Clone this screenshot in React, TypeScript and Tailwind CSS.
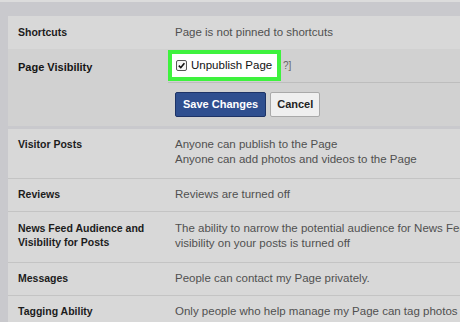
import React from "react";

const Row = ({
  label,
  lines,
  h,
  border = true,
}: {
  label: string[];
  lines: string[];
  h: string;
  border?: boolean;
}) => (
  <div className={`flex items-start ${h} ${border ? "border-t border-[#c4c4c4]" : ""}`}>
    <div className="w-[167px] shrink-0 pl-[10px] text-[10.5px] font-bold leading-[14px] text-[#1c1c1c]">
      {label.map((l) => (
        <div key={l}>{l}</div>
      ))}
    </div>
    <div className="whitespace-nowrap text-[11.5px] leading-[15px] text-[#505050]">
      {lines.map((l) => (
        <div key={l}>{l}</div>
      ))}
    </div>
  </div>
);

export default function App() {
  return (
    <div className="w-[460px] h-[322px] overflow-hidden bg-[#c9c9cd] font-['Liberation_Sans',Arial,sans-serif]">
      <div className="h-[2px] bg-[#dcdcdc]" />
      <div className="pt-[14px] pl-2">
        <div className="w-[452px] bg-[#d8d8d8]">
          {/* Shortcuts */}
          <div className="flex items-center h-[33px]">
            <div className="w-[167px] shrink-0 pl-[10px] text-[10.5px] font-bold text-[#1c1c1c]">
              Shortcuts
            </div>
            <div className="whitespace-nowrap text-[11.5px] text-[#505050]">
              Page is not pinned to shortcuts
            </div>
          </div>

          {/* Page Visibility editor */}
          <div className="flex bg-[#d1d1d1] h-[77px]">
            <div className="w-[160px] shrink-0 pl-[10px] pt-[10px] text-[11px] font-bold text-[#151515]">
              Page Visibility
            </div>
            <div className="flex-1 flex flex-col">
              <div className="h-[34px] border-b border-[#bdbdbd] flex items-center">
                <div className="flex items-center h-[31px] w-[113px] bg-white border-[4px] border-[#3ef23e] pl-[4px]">
                  <span className="w-[11px] h-[11px] rounded-[2px] border border-[#555] bg-[#f4f4f4] flex items-center justify-center">
                    <svg viewBox="0 0 10 10" className="w-[9px] h-[9px]">
                      <path d="M2 5.2 L4.2 7.4 L8.2 2.4" fill="none" stroke="#111" strokeWidth="1.8" />
                    </svg>
                  </span>
                  <span className="ml-[4px] text-[11.5px] text-[#111] whitespace-nowrap">Unpublish Page</span>
                </div>
                <span className="ml-[2px] text-[10px] text-[#666]">?]</span>
              </div>
              <div className="flex items-start gap-[4px] pt-[9px] pl-[7px]">
                <button className="h-[25px] px-[7px] bg-[#2f4f8f] border border-[#1d3366] rounded-[2px] text-white text-[11px] font-bold">
                  Save Changes
                </button>
                <button className="h-[25px] px-[6px] bg-[#efefef] border border-[#a9a9a9] rounded-[2px] text-[#222] text-[11px] font-bold">
                  Cancel
                </button>
              </div>
            </div>
          </div>
          <div className="h-[3px] bg-[#c9c9cd]" />

          <div className="pt-[8px]">
            <Row
              border={false}
              h="h-[41px]"
              label={["Visitor Posts"]}
              lines={["Anyone can publish to the Page", "Anyone can add photos and videos to the Page"]}
            />
            <Row h="h-[33px] pt-[8px]" label={["Reviews"]} lines={["Reviews are turned off"]} />
            <Row
              h="h-[51px] pt-[9px]"
              label={["News Feed Audience and", "Visibility for Posts"]}
              lines={[
                "The ability to narrow the potential audience for News Feed",
                "visibility on your posts is turned off",
              ]}
            />
            <Row h="h-[33px] pt-[8px]" label={["Messages"]} lines={["People can contact my Page privately."]} />
            <Row
              h="h-[33px] pt-[8px]"
              label={["Tagging Ability"]}
              lines={["Only people who help manage my Page can tag photos posted on it"]}
            />
          </div>
        </div>
      </div>
    </div>
  );
}
